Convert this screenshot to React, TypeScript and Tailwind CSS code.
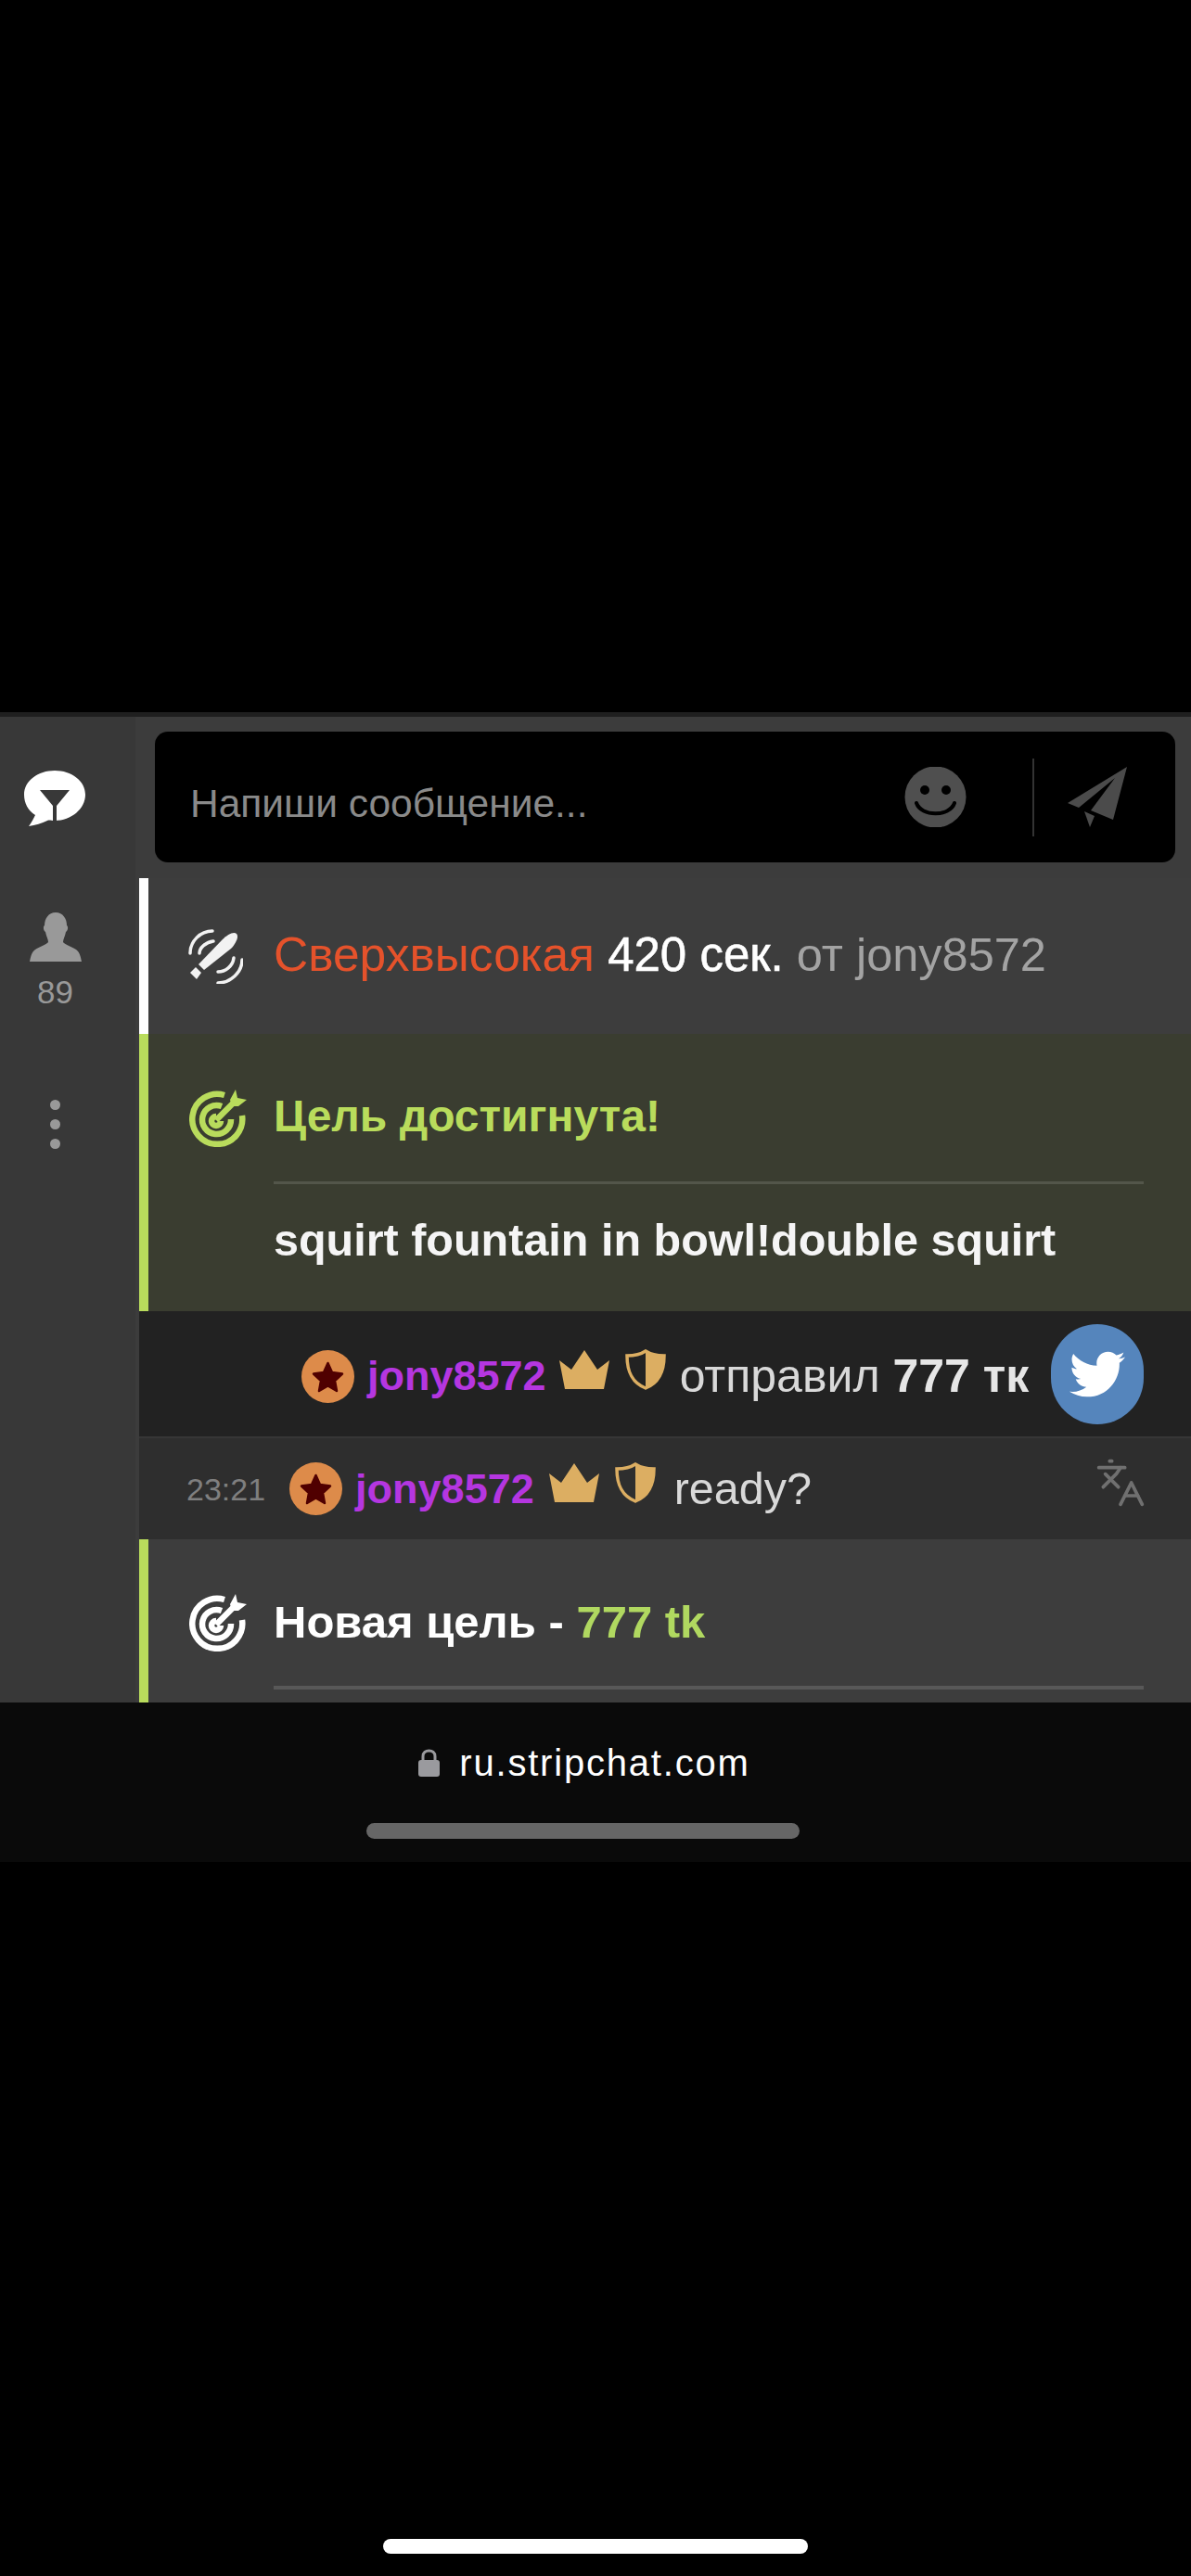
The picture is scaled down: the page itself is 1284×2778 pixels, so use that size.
import { Languages } from "lucide-react";
import { FaTwitter } from "react-icons/fa";

function ChatIcon() {
  return (
    <svg width="70" height="64" viewBox="0 0 70 64" className="block">
      <path d="M34 2C52 2 67 13 67 28C67 43 52 56 34 56C30 56 28 55 26 56C20 59 13 61 6 62C9 58 11 54 13 50C5 45 1 37 1 28C1 13 16 2 34 2Z" fill="#fff" />
      <path d="M18 23H50L36 40V58H32V40Z" fill="#383838" />
    </svg>
  );
}

function PersonIcon() {
  return (
    <svg width="56" height="53" viewBox="0 0 56 53" className="block">
      <path d="M28 0C36 0 40 7 40 14C42 15 41 20 39 21C38 26 36 29 36 32C38 35 46 37 50 40C54 43 55 48 56 53H0C1 48 2 43 6 40C10 37 18 35 20 32C20 29 18 26 17 21C15 20 14 15 16 14C16 7 20 0 28 0Z" fill="#999" />
    </svg>
  );
}

function SmileIcon() {
  return (
    <svg width="67" height="65" viewBox="0 0 67 65" className="block">
      <circle cx="33.5" cy="32.5" r="33" fill="#4f4f4f" />
      <circle cx="22" cy="25" r="5" fill="#000" />
      <circle cx="45" cy="25" r="5" fill="#000" />
      <path d="M13 39C18 54 49 54 54 39" fill="none" stroke="#000" strokeWidth="4" strokeLinecap="round" />
    </svg>
  );
}

function PlaneIcon() {
  return (
    <svg width="64" height="65" viewBox="0 0 64 65" className="block">
      <path d="M64 0L0 39L12 44L51 12L25 47L49 57Z" fill="#4b4b4b" />
      <path d="M18 48L29 53L24 65Z" fill="#4b4b4b" />
    </svg>
  );
}

function VibeIcon() {
  return (
    <svg width="60" height="60" viewBox="0 0 60 60" className="block">
      <path d="M18 45L12 39L38 12C43 7 50 3 53 6C56 9 52 17 47 22Z" fill="#f2f2f2" />
      <path d="M9 42L15 48L10 55L3 48Z" fill="#f2f2f2" />
      <g fill="none" stroke="#f2f2f2" strokeWidth="3.5" strokeLinecap="round">
        <path d="M3 27C3 14 14 3 27 3" />
        <path d="M13 27C13 21 20 15 28 14" />
        <path d="M33 59C46 59 59 48 59 34" />
        <path d="M33 47C41 47 49 41 50 32" />
      </g>
    </svg>
  );
}

function TargetIcon({ color }: { color: string }) {
  return (
    <svg width="62" height="62" viewBox="0 0 62 62" className="block">
      <g fill="none" stroke={color} strokeWidth="6.5">
        <path d="M38 6A27 27 0 1 0 57 28" />
        <path d="M35 18A15.5 15.5 0 1 0 45 32" />
        <path d="M29 29A5 5 0 1 0 34 34" />
        <path d="M29 33L50 12" />
      </g>
      <path d="M44 11L50 0L52 9L62 11L53 18L46 18Z" fill={color} />
    </svg>
  );
}

function LevelBadge() {
  return (
    <svg width="57" height="57" viewBox="0 0 57 57" className="block shrink-0">
      <circle cx="28.5" cy="28.5" r="28.5" fill="#dd8b4a" />
      <path d="M28.5 14L33 24L44 25.5L36 33L38 44L28.5 38.5L19 44L21 33L13 25.5L24 24Z" fill="#500000" stroke="#500000" strokeWidth="2.5" strokeLinejoin="round" />
    </svg>
  );
}

function CrownIcon() {
  return (
    <svg width="54" height="42" viewBox="0 0 54 42" className="block shrink-0">
      <path d="M0 11L13 21L27 0L41 21L54 11L48 42H6Z" fill="#dcae62" />
    </svg>
  );
}

function ShieldIcon() {
  return (
    <svg width="44" height="44" viewBox="0 0 44 44" className="block shrink-0">
      <path d="M22 2C28 6 35 7 42 7C42 24 37 36 22 42C7 36 2 24 2 7C9 7 16 6 22 2Z" fill="none" stroke="#dcae62" strokeWidth="3.5" />
      <path d="M22 2C28 6 35 7 42 7C42 24 37 36 22 42Z" fill="#dcae62" />
    </svg>
  );
}

function LockIcon() {
  return (
    <svg width="23" height="30" viewBox="0 0 23 30" className="block">
      <path d="M5 13V8C5 4 8 2 11.5 2C15 2 18 4 18 8V13" fill="none" stroke="#9a9a9e" strokeWidth="3" />
      <rect x="0" y="12" width="23" height="18" rx="3" fill="#9a9a9e" />
    </svg>
  );
}

function App() {
  return (
    <div className="w-[1284px] h-[2778px] bg-black flex flex-col font-['Liberation_Sans',Arial,sans-serif] overflow-hidden">
      <div className="h-[768px]" />
      <div className="h-[5px] bg-[#1f1f1f]" />

      {/* chat panel */}
      <div className="h-[1063px] flex overflow-hidden">
        <div className="w-[150px] shrink-0 bg-[#383838] border-r-4 border-[#3c3c3c] flex flex-col items-center pr-[27px]">
          <div className="mt-[56px]">
            <ChatIcon />
          </div>
          <div className="mt-[91px]">
            <PersonIcon />
          </div>
          <span className="mt-[16px] text-[35px] leading-[34px] text-[#999]">89</span>
          <div className="mt-[99px] flex flex-col gap-[10px]">
            <span className="block w-[11px] h-[11px] rounded-full bg-[#999]" />
            <span className="block w-[11px] h-[11px] rounded-full bg-[#999]" />
            <span className="block w-[11px] h-[11px] rounded-full bg-[#999]" />
          </div>
        </div>

        <div className="flex-1 min-w-0 flex flex-col bg-[#3c3c3c]">
          {/* message input */}
          <div className="pt-[16px] pb-[17px] pl-[17px] pr-[17px]">
            <div className="h-[141px] bg-black rounded-[14px] flex items-center pl-[38px]">
              <span className="pt-[15px] text-[42.5px] leading-[48px] text-[#8a8a8a]">Напиши сообщение...</span>
              <div className="ml-auto">
                <SmileIcon />
              </div>
              <div className="ml-[71px] w-[2px] h-[84px] bg-[#333]" />
              <div className="ml-[36px] mr-[52px]">
                <PlaneIcon />
              </div>
            </div>
          </div>

          {/* vibration notice */}
          <div className="h-[168px] shrink-0 border-l-[10px] border-white bg-[#3d3d3d] flex items-center pl-[42px]">
            <VibeIcon />
            <p className="ml-[33px] mb-[4px] text-[51px] leading-[52px] whitespace-nowrap">
              <span className="text-[51.5px] text-[#e5522b]">Сверхвысокая</span>
              <span className="text-white [-webkit-text-stroke:0.6px_#fff]"> 420 сек.</span>
              <span className="text-[50.5px] text-[#a3a3a3]"> от jony8572</span>
            </p>
          </div>

          {/* goal reached */}
          <div className="h-[299px] shrink-0 border-l-[10px] border-[#b9dc5c] bg-[#3a3d30] pl-[44px] pt-[60px]">
            <div className="flex items-center">
              <TargetIcon color="#b9dc5c" />
              <span className="ml-[29px] mb-[4px] text-[48px] leading-[52px] font-bold text-[#b9dc5c]">Цель достигнута!</span>
            </div>
            <div className="mt-[37px] ml-[91px] mr-[51px] h-[3px] bg-[#53564a]" />
            <p className="mt-[34px] ml-[91px] text-[48.5px] leading-[52px] whitespace-nowrap font-bold text-[#f5f5f5]">squirt fountain in bowl!double squirt</p>
          </div>

          {/* tip */}
          <div className="h-[135px] shrink-0 bg-[#222] flex items-center pl-[175px] pt-[5px]">
            <LevelBadge />
            <span className="ml-[14px] text-[45px] leading-[52px] font-bold text-[#b536e0]">jony8572</span>
            <div className="ml-[14px] mb-[14px]">
              <CrownIcon />
            </div>
            <div className="ml-[17px] mb-[14px]">
              <ShieldIcon />
            </div>
            <p className="ml-[15px] text-[50px] leading-[52px] whitespace-nowrap text-[#d9d9d9]">
              отправил <span className="font-bold text-[#e6e6e6]">777 тк</span>
            </p>
            <div className="ml-auto mr-[51px] mb-[5px] w-[100px] h-[108px] rounded-full bg-[#5585bc] flex items-center justify-center text-white">
              <FaTwitter size={60} />
            </div>
          </div>

          {/* chat message */}
          <div className="h-[111px] shrink-0 bg-[#2e2e2e] border-t-2 border-[#363636] flex items-center pl-[51px]">
            <span className="text-[34px] leading-[40px] text-[#7f7f7f]">23:21</span>
            <div className="ml-[26px]">
              <LevelBadge />
            </div>
            <span className="ml-[14px] text-[45px] leading-[52px] font-bold text-[#b536e0]">jony8572</span>
            <div className="ml-[16px] mb-[14px]">
              <CrownIcon />
            </div>
            <div className="ml-[17px] mb-[14px]">
              <ShieldIcon />
            </div>
            <span className="ml-[20px] mb-[2px] text-[48.5px] leading-[52px] text-[#d9d9d9]">ready?</span>
            <Languages className="ml-auto mr-[48px] mb-[14px] text-[#707070]" size={56} strokeWidth={1.6} />
          </div>

          {/* new goal, cut off by the browser bar */}
          <div className="flex-1 min-h-0 border-l-[10px] border-[#b9dc5c] bg-[#3d3d3d] pl-[44px] pt-[59px]">
            <div className="flex items-center">
              <TargetIcon color="#ffffff" />
              <p className="ml-[29px] mb-[2px] text-[49px] leading-[52px] font-bold text-white">
                Новая цель - <span className="text-[#b0d860]">777 tk</span>
              </p>
            </div>
            <div className="mt-[37px] ml-[91px] mr-[51px] h-[4px] bg-[#585858]" />
          </div>
        </div>
      </div>

      {/* safari address bar */}
      <div className="h-[172px] shrink-0 bg-[#0a0a0a] flex flex-col items-center">
        <div className="mt-[43px] flex items-center gap-[21px] mr-[24px]">
          <LockIcon />
          <span className="text-[40px] leading-[44px] tracking-[1.8px] text-white">ru.stripchat.com</span>
        </div>
        <div className="mt-[43px] w-[467px] h-[17px] rounded-full bg-[#666] mr-[27px]" />
      </div>

      {/* home indicator */}
      <div className="mt-[730px] mx-auto w-[458px] h-[16px] rounded-full bg-white" />
    </div>
  );
}

export default App;
